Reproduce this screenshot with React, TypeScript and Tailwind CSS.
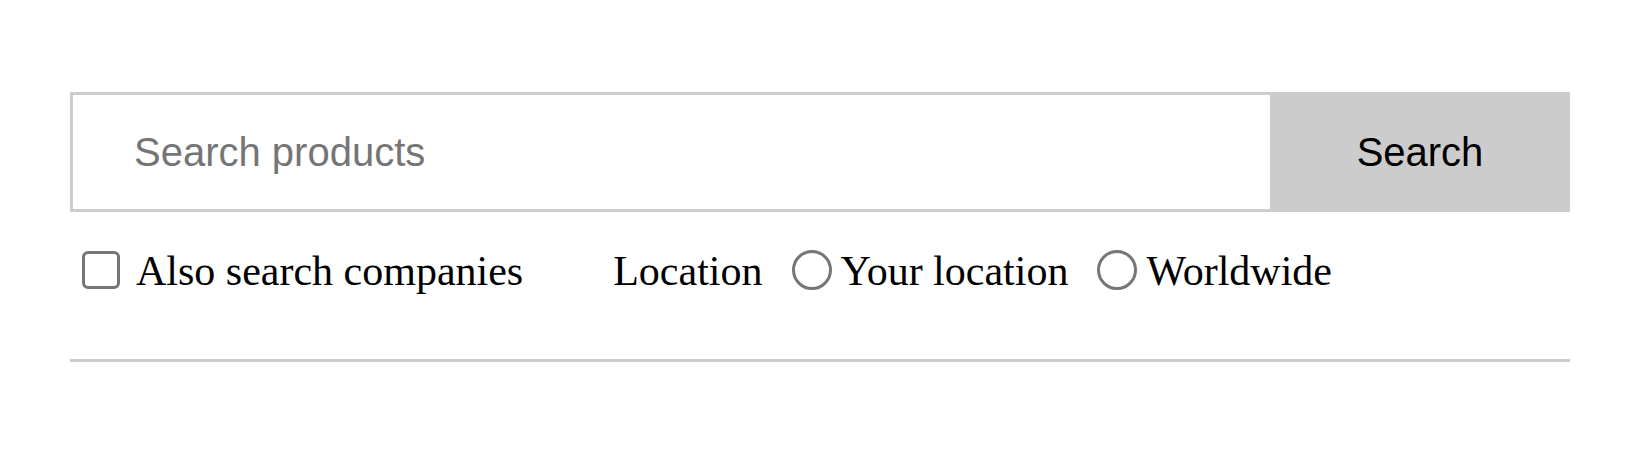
import { useState } from "react";

export default function App() {
  const [query, setQuery] = useState("");
  const [companies, setCompanies] = useState(false);
  const [location, setLocation] = useState<string | null>(null);

  return (
    <div className="min-h-[454px] bg-white pt-[92px]">
      <div className="ml-[70px] w-[1500px]">
        {/* search bar */}
        <form
          className="flex h-[120px]"
          onSubmit={(e) => e.preventDefault()}
        >
          <input
            type="text"
            value={query}
            onChange={(e) => setQuery(e.target.value)}
            placeholder="Search products"
            className="flex-1 border-[3px] border-r-0 border-[#cccccc] pl-[61px] text-[40px] text-black outline-none placeholder:text-[#757575] font-['Liberation_Sans',Arial,sans-serif]"
          />
          <button
            type="submit"
            className="w-[300px] bg-[#cccccc] text-[40px] text-black font-['Liberation_Sans',Arial,sans-serif]"
          >
            Search
          </button>
        </form>

        {/* filters */}
        <div className="mt-[38px] flex h-[40px] items-center text-[42px] text-black font-['Liberation_Serif','Times_New_Roman',serif]">
          <label className="ml-[12px] flex items-center">
            <input
              type="checkbox"
              checked={companies}
              onChange={(e) => setCompanies(e.target.checked)}
              className="h-[38px] w-[38px] appearance-none rounded-[6px] border-[3px] border-[#767676] bg-white"
            />
            <span className="ml-[16px] pt-[3px]">Also search companies</span>
          </label>

          <span className="ml-[90px] pt-[3px]">Location</span>

          <label className="ml-[29px] flex items-center">
            <input
              type="radio"
              name="location"
              checked={location === "local"}
              onChange={() => setLocation("local")}
              className="h-[40px] w-[40px] appearance-none rounded-full border-[3px] border-[#767676] bg-white"
            />
            <span className="ml-[9px] pt-[3px]">Your location</span>
          </label>

          <label className="ml-[29px] flex items-center">
            <input
              type="radio"
              name="location"
              checked={location === "world"}
              onChange={() => setLocation("world")}
              className="h-[40px] w-[40px] appearance-none rounded-full border-[3px] border-[#767676] bg-white"
            />
            <span className="ml-[9px] pt-[3px]">Worldwide</span>
          </label>
        </div>

        <hr className="mt-[69px] border-0 border-t-[3px] border-[#cccccc]" />
      </div>
    </div>
  );
}
